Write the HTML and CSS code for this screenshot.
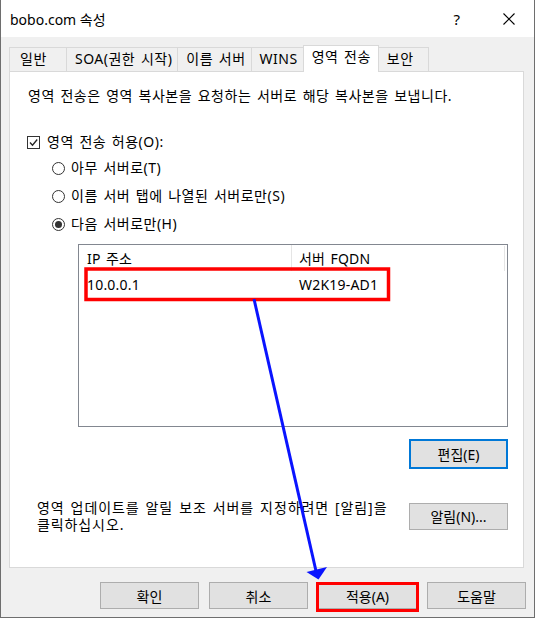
FILE: index.html
```html
<!DOCTYPE html>
<html lang="ko">
<head>
    <meta charset="UTF-8">
    <title>bobo.com 속성</title>
    <link rel="stylesheet" href="styles.css">
</head>
<body>
    <div class="window">
        <div class="titlebar">
            <span class="title">bobo.com 속성</span>
            <span class="help">?</span>
            <svg class="close" viewBox="0 0 12 12"><path d="M0.5 0.5 L11.5 11.5 M11.5 0.5 L0.5 11.5" stroke="#000" stroke-width="1.1" fill="none"/></svg>
        </div>

        <div class="tabs">
            <div class="tab tab-wide">일반</div>
            <div class="tab">SOA(권한 시작)</div>
            <div class="tab">이름 서버</div>
            <div class="tab">WINS</div>
            <div class="tab active">영역 전송</div>
            <div class="tab">보안</div>
        </div>

        <div class="panel">
            <p class="desc">영역 전송은 영역 복사본을 요청하는 서버로 해당 복사본을 보냅니다.</p>

            <div class="check">
                <span class="box"><svg viewBox="0 0 11 11"><path d="M2 5.5 L4.5 8.2 L9.2 2.5" stroke="#222" stroke-width="1.3" fill="none"/></svg></span>
                영역 전송 허용(O):
            </div>

            <div class="radios">
                <div class="radio"><span class="circle"></span>아무 서버로(T)</div>
                <div class="radio"><span class="circle"></span>이름 서버 탭에 나열된 서버로만(S)</div>
                <div class="radio"><span class="circle checked"></span>다음 서버로만(H)</div>
            </div>

            <div class="list">
                <div class="list-head">
                    <span class="col-ip">IP 주소</span>
                    <span class="col-fqdn">서버 FQDN</span>
                </div>
                <div class="list-row">
                    <span class="col-ip">10.0.0.1</span>
                    <span class="col-fqdn">W2K19-AD1</span>
                </div>
            </div>

            <div class="edit-row">
                <button class="btn btn-default">편집(E)</button>
            </div>

            <div class="notify">
                <p>영역 업데이트를 알릴 보조 서버를 지정하려면 [알림]을<br>클릭하십시오.</p>
                <button class="btn">알림(N)...</button>
            </div>
        </div>

        <div class="footer">
            <button class="btn">확인</button>
            <button class="btn">취소</button>
            <button class="btn">적용(A)</button>
            <button class="btn">도움말</button>
        </div>

        <!-- annotaties bovenop het dialoogvenster -->
        <svg class="marks" viewBox="0 0 535 618">
            <rect x="86" y="269" width="302.5" height="30.5" fill="none" stroke="#ff0000" stroke-width="3.5"/>
            <rect x="317.5" y="583.5" width="100" height="27" fill="none" stroke="#ff0000" stroke-width="3"/>
            <line x1="254" y1="299" x2="316" y2="571" stroke="#0a14ff" stroke-width="3"/>
            <polygon points="306.5,572 327,567 318.5,579.5" fill="#0a14ff"/>
        </svg>
    </div>
</body>
</html>
```

FILE: styles.css
```css
* {
    box-sizing: border-box;
}
body {
    margin: 0;
    font-family: "Noto Sans", "Noto Sans CJK KR", sans-serif;
    font-size: 14px;
    letter-spacing: 0.5px;
    word-spacing: 1.5px;
    color: #000;
    background: #fff;
}
.window {
    position: relative;
    width: 535px;
    height: 618px;
    background: #f0f0f0;
    border: 1px solid #6e6e6e;
    border-top: none;
    display: flex;
    flex-direction: column;
}
.titlebar {
    height: 37px;
    background: #fff;
    display: flex;
    align-items: center;
    padding-left: 9px;
    letter-spacing: 0;
    word-spacing: 0;
}
.title {
    flex: 1;
}
.help {
    font-size: 15px;
    margin-right: 43px;
}
.close {
    width: 12px;
    height: 12px;
    margin-right: 19px;
}

/* tabbladen */
.tabs {
    display: flex;
    height: 26px;
    margin: 8px 0 0 8px;
}
.tab {
    height: 24px;
    min-width: 51px;
    margin-top: 2px;
    margin-right: -1px;
    padding: 0 5px 0 8px;
    line-height: 22px;
    border: 1px solid #d9d9d9;
    border-bottom: none;
    background: #f0f0f0;
    white-space: nowrap;
}
.tab-wide {
    min-width: 58px;
    padding-left: 10px;
}
.tab.active {
    position: relative;
    z-index: 1;
    height: 27px;
    margin-top: 0;
    padding-right: 7px;
    background: #fff;
}

/* inhoud van het tabblad */
.panel {
    height: 497px;
    margin: 0 10px 0 8px;
    padding: 16px 15px 0 17px;
    border: 1px solid #d9d9d9;
    background: #fff;
}
.desc {
    margin: 0 0 0 1px;
    line-height: 16px;
}
.check {
    display: flex;
    align-items: center;
    margin-top: 30px;
    line-height: 16px;
}
.box {
    width: 13px;
    height: 13px;
    margin-right: 7px;
    border: 1px solid #333;
    display: flex;
}
.box svg {
    width: 11px;
    height: 11px;
}
.radios {
    display: flex;
    flex-direction: column;
    gap: 12px;
    margin: 10px 0 0 25px;
}
.radio {
    display: flex;
    align-items: center;
    line-height: 16px;
}
.circle {
    width: 13px;
    height: 13px;
    margin-right: 6px;
    border: 1px solid #333;
    border-radius: 50%;
    display: flex;
    align-items: center;
    justify-content: center;
}
.circle.checked::after {
    content: "";
    width: 7px;
    height: 7px;
    border-radius: 50%;
    background: #333;
}

/* lijst met servers */
.list {
    height: 183px;
    margin: 12px 0 0 51px;
    border: 1px solid #828790;
    background: #fff;
    letter-spacing: 0.2px;
}
.list-head,
.list-row {
    display: flex;
    height: 26px;
    align-items: center;
}
.list-head {
    position: relative;
}
.list-head::after {
    content: "";
    position: absolute;
    right: 2px;
    top: 1px;
    bottom: 0;
    border-left: 1px solid #e5e5e5;
}
.col-ip {
    width: 213px;
    padding-left: 8px;
}
.col-fqdn {
    padding-left: 7px;
}
.list-head .col-ip {
    align-self: stretch;
    display: flex;
    align-items: center;
    border-right: 1px solid #e5e5e5;
}

/* knoppen */
.btn {
    font: inherit;
    color: #000;
    background: #e1e1e1;
    border: 1px solid #adadad;
    padding: 0;
    width: 99px;
    height: 27px;
}
.btn-default {
    height: 30px;
    border: 2px solid #0078d7;
}
.edit-row {
    display: flex;
    justify-content: flex-end;
    margin-top: 12px;
}
.notify {
    display: flex;
    align-items: center;
    justify-content: space-between;
    margin: 30px 0 0 10px;
}
.notify p {
    margin: 0;
    line-height: 17px;
    letter-spacing: 0.9px;
    white-space: nowrap;
}
.footer {
    display: flex;
    justify-content: flex-end;
    gap: 10px;
    padding: 14px 8px 0 0;
}
.marks {
    position: absolute;
    left: -1px;
    top: 0;
    width: 535px;
    height: 618px;
    pointer-events: none;
}
```
